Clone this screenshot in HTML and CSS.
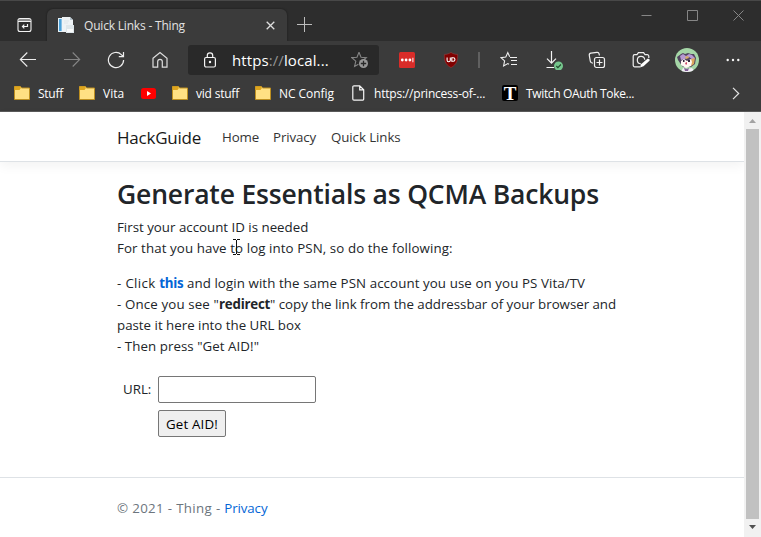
FILE: index.html
```
<!DOCTYPE html>
<html lang="en">
<head>
<meta charset="utf-8">
<title>Quick Links - Thing</title>
<link rel="stylesheet" href="styles.css">
</head>
<body>
<div class="window">
  <div class="titlebar">
    <svg class="tab-actions" width="16" height="16" viewBox="0 0 16 16" fill="none" stroke="#f2f2f2" stroke-width="1.1"><rect x="1" y="1.5" width="13" height="13" rx="2"/><path d="M1 4.5h13M2 3h11" /><path d="M10.500 7v2.500H5.500M7.300 7.700 5.500 9.500l1.800 1.800" stroke-width="1.2"/></svg>
    <div class="tab">
      <svg class="favicon" width="16" height="16" viewBox="0 0 16 16"><path d="M0 1h7v14H0z" fill="#e6f1f7"/><path d="M1 2h2.6v12H1z" fill="#4aa0d8"/><path d="M4 0h8l3 3v12H4z" fill="#eef3f6"/><path d="M12 0v3h3z" fill="#b7c5ce"/><path d="M6 4h5M6 6h4" stroke="#dfe6ea"/><path d="M8 8h8v8H8z" fill="#dfe7eb"/><path d="M9 12h6v3H9z" fill="#f8fafb"/></svg>
      <span class="tab-title">Quick Links - Thing</span>
      <svg class="tab-close" width="9" height="9" viewBox="0 0 9 9" stroke="#dedede" stroke-width="1.3"><path d="M.7.7l7.6 7.6M8.3.7.7 8.3"/></svg>
    </div>
    <svg class="new-tab" width="15" height="15" viewBox="0 0 15 15" stroke="#bdbdbd"><path d="M7.5 0v15M0 7.5h15"/></svg>
    <div class="controls">
      <svg width="11" height="11" viewBox="0 0 11 11" stroke="#868686"><path d="M.5 5.5h10"/></svg>
      <svg width="11" height="11" viewBox="0 0 11 11" stroke="#868686" fill="none"><path d="M.5.5h10v10H.5z"/></svg>
      <svg width="11" height="11" viewBox="0 0 11 11" stroke="#868686"><path d="M.5.5l10 10M10.5.5l-10 10"/></svg>
    </div>
  </div>

  <div class="toolbar">
    <div class="nav-icons">
      <svg width="18" height="18" viewBox="0 0 18 18" fill="none" stroke="#ededed" stroke-width="1.1"><path d="M17 8.500H1.5M8.3 1.500 1.3 8.500l7 7"/></svg>
      <svg width="18" height="18" viewBox="0 0 18 18" fill="none" stroke="#858585" stroke-width="1.1"><path d="M1 8.500h15.5M9.7 1.500l7 7-7 7"/></svg>
      <svg width="18" height="18" viewBox="0 0 18 18" fill="none" stroke="#ededed" stroke-width="1.2"><path d="M16.6 9a7.6 7.6 0 1 1-2.3-5.4L16.3 5.5M16.5 1v4.7h-4.7"/></svg>
      <svg width="18" height="18" viewBox="0 0 18 18" fill="none" stroke="#dedede" stroke-width="1.2"><path d="M2 7.3 9 1.5l7 5.8v8.9h-4.7v-5.6a2.3 2.3 0 0 0-4.6 0v5.6H2z"/></svg>
    </div>
    <div class="address">
      <svg width="14" height="17" viewBox="0 0 14 17" fill="none" stroke="#f5f5f5" stroke-width="1.2"><rect x="1.6" y="5.500" width="10.8" height="9.5" rx="1.5"/><path d="M4.3 5.500V3.500a2.7 2.7 0 0 1 5.4 0v2"/><circle cx="7" cy="10" r=".6" fill="#fff"/></svg>
      <span class="url">https<i>://</i>local...</span>
      <svg width="18" height="18" viewBox="0 0 18 18" fill="none" stroke="#858585" stroke-width="1.1"><path d="m8 1.3 2 4.900 5.300.400-2.200 1.900M8 1.3 6 6.2l-5.2.4 4 3.5-1.2 5.3 3.800-2.200"/><circle cx="12.500" cy="12.500" r="4.500" fill="#999" stroke="none"/><path d="M12.500 9.800v5.400M9.800 12.500h5.400" stroke="#292929" stroke-width="1.300"/></svg>
    </div>
    <div class="tool-icons">
      <svg width="16" height="16" viewBox="0 0 16 16"><rect width="16" height="16" rx="1.5" fill="#d92c29"/><g fill="#fff"><circle cx="3.3" cy="8" r="1.4"/><circle cx="7.1" cy="8" r="1.4"/><circle cx="10.9" cy="8" r="1.4"/><path d="M13.4 5.7h1v4.6h-1z"/></g></svg>
      <svg width="16" height="16" viewBox="0 0 16 16"><path d="M8 .4c2 1.4 4.2 2 6.6 2 .2 5.600-.5 9.900-6.600 13.200C1.900 12.300 1.200 8 1.400 2.400 3.800 2.400 6 1.800 8 .4z" fill="#800000" stroke="#a34141" stroke-width=".5"/><path d="M4.100 5.500v2.700a1.600 1.600 0 0 0 3.200 0V5.500M8.800 5.800h1.400a1.700 1.700 0 0 1 0 3.500H8.800z" fill="none" stroke="#fff" stroke-width="1.100"/></svg>
      <span class="divider"></span>
      <svg width="18" height="18" viewBox="0 0 18 18" fill="none" stroke="#f0f0f0" stroke-width="1.100"><path d="M9.700 5.800 7.800 1.600 5.800 6 1 6.600l3.600 3.300-1 5 4.200-2.300 1.200.7M10 6.500h7M11 9.500h6M11 13.500h6"/></svg>
      <svg width="20" height="20" viewBox="0 0 20 20" fill="none" stroke="#f5f5f5" stroke-width="1.200"><path d="M7.500 1v12M3 8.700l4.500 4.500L12 8.700M2.500 17.500H10"/><circle cx="14.500" cy="16" r="4.500" fill="#75c68d" stroke="none"/><path d="m12.300 16 1.600 1.700 3-3.200" stroke="#244b2e"/></svg>
      <svg width="18" height="18" viewBox="0 0 18 18" fill="none" stroke="#f0f0f0" stroke-width="1.200"><rect x="6.500" y="6.500" width="10" height="10" rx="2"/><path d="M11.500 8.500v6M8.500 11.500h6M4.900 12.200 3.200 11.500a2 2 0 0 1-.9-1.400L1.300 4.500a2 2 0 0 1 1.600-2.300l6-.9a2 2 0 0 1 2.200 1.600l.3 1.600"/></svg>
      <svg width="18" height="18" viewBox="0 0 18 18" fill="none" stroke="#f0f0f0" stroke-width="1.200"><path d="M8 15.800H2.700a1.500 1.500 0 0 1-1.500-1.500V5.200a1.500 1.500 0 0 1 1.500-1.500H5l1.400-2h5.200l1.400 2h2.300a1.500 1.500 0 0 1 1.500 1.500V7"/><path d="M8.700 12.700a3.700 3.700 0 1 1 4-4"/><path d="m8 16.500 1-3.200L15.500 7.800a1.500 1.500 0 0 1 2 2l-6 5.400z" fill="#fff" stroke="none"/></svg>
      <svg width="24" height="24" viewBox="0 0 24 24"><clipPath id="round"><circle cx="12" cy="12" r="12"/></clipPath><g clip-path="url(#round)"><path fill="#a5d6a7" d="M0 0h24v24H0z"/><path d="M3 12 2 9l4-3 2-1 2 1 3-1 3 1 3 0 2 4-1 6-4 3H8l-3-4z" fill="#51445f"/><path d="M5 8l3-2 3 2 3-2 3 1 3 3-2 2-4-3-4 2-4 1z" fill="#b79ad2"/><path d="m10 9 3-1 1 2-3 1z" fill="#d8ad62"/><path d="m16 11 4-1-1 6-3 2z" fill="#dca75c"/><path d="M6 13l3-2 3 2 4-2 1 3-1 4-5 2-5-3z" fill="#fff8f3"/><path d="M8 12h1.500v2H8zM13 12h2v2h-2z" fill="#30273c"/><path d="m10 15 2-1 0 2-1 1z" fill="#cc4865"/><path d="m6 24 2-4 4 1 5-1 3 4z" fill="#f3edf7"/><path d="m9 20 3 1 2-1-1 3h-3z" fill="#806096"/></g></svg>
      <svg width="14" height="4" viewBox="0 0 14 4" fill="#f5f5f5"><circle cx="1.700" cy="2" r="1.200"/><circle cx="7" cy="2" r="1.200"/><circle cx="12.300" cy="2" r="1.200"/></svg>
    </div>
  </div>

  <div class="bookmarks">
    <a class="stuff"><svg width="16" height="14" viewBox="0 0 16 14"><path d="M.5 13.500V.5h6l1 1.500h8v11.500z" fill="#ffe083" stroke="#bd8f20"/><path d="M.5.5h5.500l.8 1.700L5.500 4H.5z" fill="#dea51e"/></svg><span>Stuff</span></a>
    <a class="vita"><svg width="16" height="14" viewBox="0 0 16 14"><path d="M.5 13.500V.5h6l1 1.500h8v11.500z" fill="#ffe083" stroke="#bd8f20"/><path d="M.5.5h5.500l.8 1.700L5.500 4H.5z" fill="#dea51e"/></svg><span>Vita</span></a>
    <a class="tube"><svg width="15" height="11" viewBox="0 0 15 11"><rect width="15" height="11" rx="2.500" fill="#f00"/><path d="m6 3 4 2.500L6 8z" fill="#fff"/></svg></a>
    <a class="vid"><svg width="16" height="14" viewBox="0 0 16 14"><path d="M.5 13.500V.5h6l1 1.500h8v11.500z" fill="#ffe083" stroke="#bd8f20"/><path d="M.5.5h5.500l.8 1.700L5.500 4H.5z" fill="#dea51e"/></svg><span>vid stuff</span></a>
    <a class="config"><svg width="16" height="14" viewBox="0 0 16 14"><path d="M.5 13.500V.5h6l1 1.500h8v11.500z" fill="#ffe083" stroke="#bd8f20"/><path d="M.5.5h5.500l.8 1.700L5.500 4H.5z" fill="#dea51e"/></svg><span>NC Config</span></a>
    <a class="page-link"><svg width="13" height="16" viewBox="0 0 13 16" fill="none" stroke="#f5f5f5" stroke-width="1.200"><path d="M2 .8h5.700l4 4V14a1.200 1.200 0 0 1-1.200 1.200H2A1.200 1.200 0 0 1 .8 14V2A1.200 1.200 0 0 1 2 .8zM7.700.8v4h4"/></svg><span>https://princess-of-...</span></a>
    <a class="twitch"><b class="t-icon">T</b><span>Twitch OAuth Toke...</span></a>
    <svg class="more" width="8" height="13" viewBox="0 0 8 13" fill="none" stroke="#e4e4e4" stroke-width="1.200"><path d="m1 .8 5.700 5.700L1 12.200"/></svg>
  </div>

  <div class="viewport">
    <div class="page">
      <header class="navbar">
        <a class="brand">HackGuide</a>
        <a class="home">Home</a>
        <a class="privacy">Privacy</a>
        <a class="quick">Quick Links</a>
      </header>
      <main>
        <h2>Generate Essentials as QCMA Backups</h2>
        <p>First your account ID is needed<br><span class="wide">For that you have to log into PSN, so do the following:</span></p>
        <p><span class="wide"><span class="click">- Click </span><a class="this">this</a> and login with the same PSN account you use on you PS Vita/TV</span><br>
        <span class="once">- Once you see "<b>redirect</b></span><span class="copy">" copy the link from the addressbar of your browser and</span><br>
        paste it here into the URL box<br>
        <span class="then">- Then press "Get AID!"</span></p>
        <form>
          <label for="url">URL:</label><input id="url" type="text">
          <button type="button">Get AID!</button>
        </form>
        <svg class="cursor" width="7" height="16" viewBox="0 0 7 16" fill="none"><path d="M0 .5h3M4 .5h3M3.500 1v14M0 15.500h3M4 15.500h3" stroke="#111"/></svg>
      </main>
      <footer>© 2021 - Thing - <a>Privacy</a></footer>
    </div>
    <div class="scrollbar">
      <svg width="7" height="4" viewBox="0 0 7 4"><path d="M0 4 3.500 0 7 4z" fill="#a3a3a3"/></svg>
      <div class="thumb"></div>
      <svg width="7" height="4" viewBox="0 0 7 4"><path d="M0 0h7L3.500 4z" fill="#505050"/></svg>
    </div>
  </div>
</div>
</body>
</html>
```
FILE: styles.css
```
* { box-sizing: border-box; }
body { margin: 0; font-family: "Open Sans", sans-serif; }
svg { display: block; flex: none; }
.window { width: 761px; height: 537px; overflow: hidden; display: flex; flex-direction: column; background: #3b3b3b; }

.titlebar { height: 41px; flex: none; display: flex; background: #2d2d2d; border-top: 1px solid #484848; }
.tab-actions { margin: 16px 14px 0 17px; }
.tab { width: 240px; height: 32px; margin-top: 8px; padding: 0 12px 0 11px; display: flex; align-items: center; background: #3b3b3b; border-radius: 6px 6px 0 0; box-shadow: 0 0 2px #171717; }
.tab-title { margin-left: 10px; font-size: 12px; letter-spacing: -.19px; color: #e2e2e2; white-space: nowrap; }
.tab-close { margin-left: auto; }
.new-tab { margin: 16px 0 0 10px; }
.controls { display: flex; gap: 35px; margin: 9px 17px 0 auto; }

.toolbar { height: 38px; flex: none; display: flex; align-items: center; position: relative; background: #3b3b3b; }
.nav-icons { display: flex; gap: 26px; padding-left: 19px; }
.address { width: 191px; height: 30px; margin-left: 19px; padding: 0 10px 0 15px; display: flex; align-items: center; border-radius: 3px; background: #292929; }
.url { margin-left: 15px; font-size: 15px; letter-spacing: .1px; color: #fff; }
.url i { font-style: normal; color: #939393; }
.address svg:last-child { margin-left: auto; }
.tool-icons { display: flex; align-items: center; margin-left: 20px; }
.tool-icons > :nth-child(2) { margin-left: 28px; }
.divider { width: 2px; height: 16px; margin: 0 20px 0 19px; background: #606060; }
.tool-icons > :nth-child(5) { margin-left: 26px; }
.tool-icons > :nth-child(6) { margin-left: 24px; }
.tool-icons > :nth-child(7) { margin-left: 26px; }
.tool-icons > :nth-child(8) { margin-left: 25px; }
.tool-icons > :nth-child(9) { margin-left: 27px; }

.bookmarks { height: 33px; flex: none; display: flex; align-items: center; padding: 0 21px 4px 14px; border-bottom: 1px solid #5a5a5a; color: #fff; font-size: 12px; }
.bookmarks a { display: flex; align-items: center; white-space: nowrap; }
.bookmarks a span { margin-left: 8px; }
.stuff { width: 65px; letter-spacing: -.26px; }
.vita { width: 62px; }
.tube { width: 31px; }
.vid { width: 83px; letter-spacing: -.21px; }
.config { width: 97px; letter-spacing: -.05px; }
.page-link { width: 150px; letter-spacing: -.21px; }
.bookmarks .page-link span { margin-left: 9px; }
.twitch { letter-spacing: -.34px; }
.t-icon { width: 16px; height: 16px; background: #000; border-radius: 2px; font: bold 19px/17px "Liberation Serif", serif; letter-spacing: 0; text-align: center; }
.more { margin-left: auto; }

.viewport { height: 425px; flex: none; display: flex; background: #fff; }
.page { width: 744px; color: #212529; font-size: 13.3px; line-height: 21px; }
.navbar { height: 50px; padding: 1px 0 0 117px; display: flex; align-items: center; border-bottom: 1px solid #dee2e6; box-shadow: 0 4px 11px rgba(0, 0, 0, .05); color: #343434; }
.brand { width: 105px; font-size: 17px; letter-spacing: -.23px; color: #181818; }
.home { width: 51px; letter-spacing: -.14px; }
.privacy { width: 58px; letter-spacing: -.12px; }
.quick { letter-spacing: -.08px; }
main { position: relative; height: 315px; padding: 15px 117px 0; white-space: nowrap; }
h2 { margin: 0 0 6px; font-size: 26.5px; line-height: 34px; font-weight: 600; letter-spacing: -.18px; }
p { margin: 0 0 14px; }
.wide { letter-spacing: .09px; }
.click { letter-spacing: .33px; }
.this { color: #0366d6; font-weight: 700; letter-spacing: -.27px; }
.once { letter-spacing: .137px; }
.once b { letter-spacing: -.23px; }
.copy { letter-spacing: -.027px; }
.then { letter-spacing: .058px; }
form { display: grid; grid-template-columns: 41px auto; justify-content: start; row-gap: 7px; padding-top: 5px; }
label { padding-left: 6px; align-self: center; }
input { width: 158px; height: 27px; border: 1px solid #767676; border-radius: 2px; font: inherit; }
button { grid-column: 2; width: 68px; height: 27px; padding: 1px 0 0; border: 1px solid #767676; border-radius: 2px; background: #efefef; color: #000; font: inherit; letter-spacing: .17px; }
.cursor { position: absolute; left: 233px; top: 77px; }
footer { height: 60px; padding-left: 117px; border-top: 1px solid #dee2e6; line-height: 61px; letter-spacing: .34px; color: #6c757d; }
footer a { color: #0366d6; letter-spacing: -.1px; }

.scrollbar { width: 17px; height: 425px; padding: 7px 0 8px; display: flex; flex-direction: column; align-items: center; justify-content: space-between; background: #f1f1f1; }
.thumb { width: 13px; height: 390px; background: #c1c1c1; }
```
